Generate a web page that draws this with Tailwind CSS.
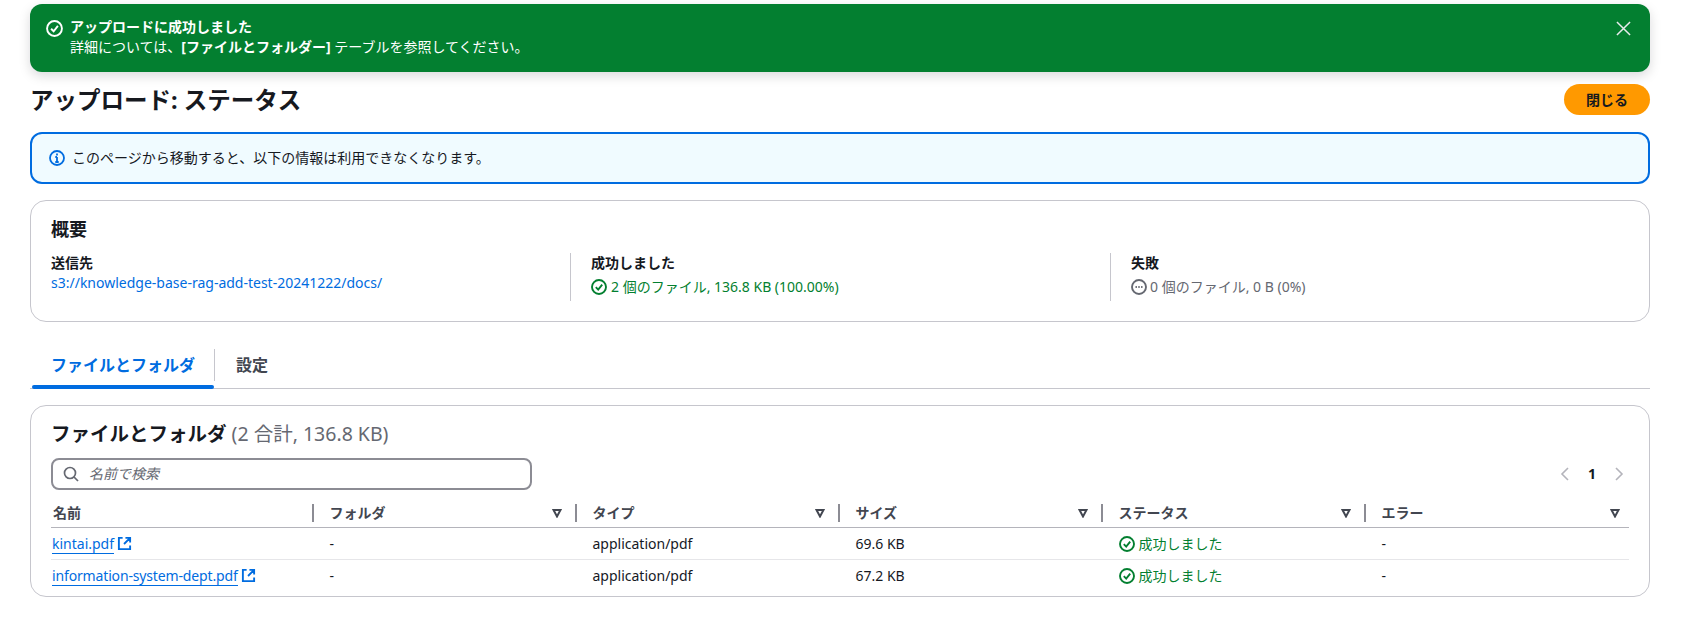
<!DOCTYPE html>
<html lang="ja">
<head>
<meta charset="utf-8">
<script src="https://cdn.jsdelivr.net/npm/@tailwindcss/browser@4"></script>
</head>
<body class="bg-white overflow-hidden">
<div class="w-[1689px] h-[630px] pl-[30px] pr-[39px] pt-[4px] flex flex-col text-[14px] leading-[20px] text-[#16191f] font-['Noto_Sans','Noto_Sans_CJK_JP',sans-serif]">

  <div class="h-[68px] shrink-0 rounded-[12px] bg-[#037f30] text-white flex justify-between pl-[16px] pr-[19px] pt-[13px] shadow-[0_4px_12px_rgba(0,7,22,0.15)]">
    <div class="flex gap-[7px]">
      <svg class="w-[17px] h-[17px] mt-[3px]" viewBox="0 0 16 16" fill="none" stroke="currentColor" stroke-width="1.8"><circle cx="8" cy="8" r="7"/><path d="M4.8 8.2 7.2 10.6 11.2 5.6"/></svg>
      <div>
        <div class="font-bold">アップロードに成功しました</div>
        <div>詳細については、<span class="font-bold">[ファイルとフォルダー]</span> テーブルを参照してください。</div>
      </div>
    </div>
    <svg class="w-[15px] h-[15px] mt-[4px]" viewBox="0 0 16 16" fill="none" stroke="#e9ebed" stroke-width="1.6"><path d="M1 1 15 15M15 1 1 15"/></svg>
  </div>

  <div class="h-[31px] mt-[12px] shrink-0 flex justify-between items-center">
    <h1 class="text-[23.5px] leading-[31px] mt-[2px] font-bold text-[#16191f]">アップロード: ステータス</h1>
    <button class="w-[86px] h-[31px] rounded-full bg-[#ff9900] text-[#16191f] font-bold text-[14px]">閉じる</button>
  </div>

  <div class="h-[52px] mt-[17px] shrink-0 rounded-[12px] border-2 border-[#006ce0] bg-[#f0fbff] flex items-center gap-[7px] pl-[17px]">
    <svg class="w-[16px] h-[16px]" viewBox="0 0 16 16" fill="none" stroke="#006ce0" stroke-width="1.8"><circle cx="8" cy="8" r="7"/><path d="M8 7v5M6.3 12h3.4M6.3 7H8"/><path d="M8 3.6v1.8" stroke-width="1.8"/></svg>
    <span>このページから移動すると、以下の情報は利用できなくなります。</span>
  </div>

  <section class="h-[122px] mt-[16px] shrink-0 rounded-[16px] border border-[#c6c6cd] pl-[20px] pr-[20px] pt-[16px]">
    <h2 class="text-[18px] leading-[24px] font-bold">概要</h2>
    <div class="grid grid-cols-[519px_540px_1fr] mt-[12px]">
      <div class="h-[48px]">
        <div class="font-bold">送信先</div>
        <a class="text-[#006ce0]">s3://knowledge-base-rag-add-test-20241222/docs/</a>
      </div>
      <div class="h-[48px] border-l border-[#c6c6cd] pl-[20px]">
        <div class="font-bold">成功しました</div>
        <div class="flex items-center gap-[4px] text-[#037f30] mt-[4px]">
          <svg class="w-[16px] h-[16px]" viewBox="0 0 16 16" fill="none" stroke="currentColor" stroke-width="1.9"><circle cx="8" cy="8" r="7"/><path d="M4.8 8.2 7.2 10.6 11.2 5.6"/></svg>
          <span>2 個のファイル, 136.8 KB (100.00%)</span>
        </div>
      </div>
      <div class="h-[48px] border-l border-[#c6c6cd] pl-[20px]">
        <div class="font-bold">失敗</div>
        <div class="flex items-center gap-[3px] text-[#656871] mt-[4px]">
          <svg class="w-[16px] h-[16px]" viewBox="0 0 16 16" fill="none" stroke="currentColor" stroke-width="1.9"><circle cx="8" cy="8" r="7"/><path d="M4.5 8h1.4M7.3 8h1.4M10.1 8h1.4" stroke-width="1.8"/></svg>
          <span>0 個のファイル, 0 B (0%)</span>
        </div>
      </div>
    </div>
  </section>

  <div class="h-[41px] mt-[26px] shrink-0 flex border-b border-[#c6c6cd] relative">
    <div class="w-[182px] ml-[2px] relative flex items-center pl-[19px] pb-[7px] text-[16px] font-bold text-[#006ce0]">
      ファイルとフォルダ
      <div class="absolute left-0 right-0 bottom-[-1px] h-[4px] rounded-full bg-[#006ce0]"></div>
    </div>
    <div class="w-px h-[32px] mt-[1px] bg-[#c6c6cd]"></div>
    <div class="flex items-center pl-[21px] pb-[7px] text-[16px] font-bold text-[#424650]">設定</div>
  </div>

  <section class="h-[192px] mt-[16px] shrink-0 rounded-[16px] border border-[#c6c6cd] pl-[20px] pr-[20px] pt-[16px]">
    <h2 class="text-[19.5px] leading-[24px] font-bold">ファイルとフォルダ <span class="font-normal text-[#656871]">(2 合計, 136.8 KB)</span></h2>
    <div class="flex justify-between items-center mt-[12px]">
      <div class="w-[481px] h-[32px] rounded-[8px] border-2 border-[#8c8c94] flex items-center gap-[10px] pl-[10px]">
        <svg class="w-[16px] h-[16px]" viewBox="0 0 16 16" fill="none" stroke="#656871" stroke-width="1.7"><circle cx="7" cy="7" r="5.5"/><path d="M11 11 15 15"/></svg>
        <span class="italic text-[#656871]">名前で検索</span>
      </div>
      <div class="flex items-center gap-[17px] pr-[4px]">
        <svg class="w-[12px] h-[16px]" viewBox="0 0 12 16" fill="none" stroke="#b4b4bb" stroke-width="1.6"><path d="M9 2 3 8l6 6"/></svg>
        <span class="font-bold">1</span>
        <svg class="w-[12px] h-[16px]" viewBox="0 0 12 16" fill="none" stroke="#b4b4bb" stroke-width="1.6"><path d="M3 2l6 6-6 6"/></svg>
      </div>
    </div>
    <div class="mt-[6px]">
      <div class="grid grid-cols-[262.5px_263px_263px_263px_263px_1fr] h-[32px] pt-[2px] border-b border-[#b4b4bb] text-[#424650] font-bold items-center">
        <div class="flex justify-between items-center pl-[2px] h-[18px]"><span>名前</span><i class="w-[2px] h-[18px] bg-[#8c8c94]"></i></div>
        <div class="flex justify-between items-center pl-[16px] h-[18px]"><span>フォルダ</span><span class="flex items-center gap-[13px]"><svg class="w-[10px] h-[10px]" viewBox="0 0 10 10" fill="none" stroke="#424650" stroke-width="2"><path d="M1.5 2h7L5 8.5z"/></svg><i class="w-[2px] h-[18px] bg-[#8c8c94]"></i></span></div>
        <div class="flex justify-between items-center pl-[16px] h-[18px]"><span>タイプ</span><span class="flex items-center gap-[13px]"><svg class="w-[10px] h-[10px]" viewBox="0 0 10 10" fill="none" stroke="#424650" stroke-width="2"><path d="M1.5 2h7L5 8.5z"/></svg><i class="w-[2px] h-[18px] bg-[#8c8c94]"></i></span></div>
        <div class="flex justify-between items-center pl-[16px] h-[18px]"><span>サイズ</span><span class="flex items-center gap-[13px]"><svg class="w-[10px] h-[10px]" viewBox="0 0 10 10" fill="none" stroke="#424650" stroke-width="2"><path d="M1.5 2h7L5 8.5z"/></svg><i class="w-[2px] h-[18px] bg-[#8c8c94]"></i></span></div>
        <div class="flex justify-between items-center pl-[16px] h-[18px]"><span>ステータス</span><span class="flex items-center gap-[13px]"><svg class="w-[10px] h-[10px]" viewBox="0 0 10 10" fill="none" stroke="#424650" stroke-width="2"><path d="M1.5 2h7L5 8.5z"/></svg><i class="w-[2px] h-[18px] bg-[#8c8c94]"></i></span></div>
        <div class="flex justify-between items-center pl-[16px] pr-[9px] h-[18px]"><span>エラー</span><svg class="w-[10px] h-[10px]" viewBox="0 0 10 10" fill="none" stroke="#424650" stroke-width="2"><path d="M1.5 2h7L5 8.5z"/></svg></div>
      </div>
      <div class="grid grid-cols-[262.5px_263px_263px_263px_263px_1fr] h-[32px] border-b border-[#e6e6e9] items-center">
        <div class="flex items-center gap-[3px] pl-[1px]"><a class="text-[#006ce0] border-b border-[#006ce0] leading-[19px]">kintai.pdf</a><svg class="w-[15px] h-[15px]" viewBox="0 0 16 16" fill="none" stroke="#006ce0" stroke-width="2"><path d="M6 2H2v12h12v-4M9 2h5v5M14 2 7.5 8.5"/></svg></div>
        <div class="pl-[16px]">-</div>
        <div class="pl-[16px]">application/pdf</div>
        <div class="pl-[16px]">69.6 KB</div>
        <div class="pl-[16px] flex items-center gap-[4px] text-[#037f30]"><svg class="w-[16px] h-[16px]" viewBox="0 0 16 16" fill="none" stroke="currentColor" stroke-width="1.9"><circle cx="8" cy="8" r="7"/><path d="M4.8 8.2 7.2 10.6 11.2 5.6"/></svg><span>成功しました</span></div>
        <div class="pl-[16px]">-</div>
      </div>
      <div class="grid grid-cols-[262.5px_263px_263px_263px_263px_1fr] h-[31px] items-center">
        <div class="flex items-center gap-[3px] pl-[1px]"><a class="text-[#006ce0] border-b border-[#006ce0] leading-[19px] tracking-[-0.15px]">information-system-dept.pdf</a><svg class="w-[15px] h-[15px]" viewBox="0 0 16 16" fill="none" stroke="#006ce0" stroke-width="2"><path d="M6 2H2v12h12v-4M9 2h5v5M14 2 7.5 8.5"/></svg></div>
        <div class="pl-[16px]">-</div>
        <div class="pl-[16px]">application/pdf</div>
        <div class="pl-[16px]">67.2 KB</div>
        <div class="pl-[16px] flex items-center gap-[4px] text-[#037f30]"><svg class="w-[16px] h-[16px]" viewBox="0 0 16 16" fill="none" stroke="currentColor" stroke-width="1.9"><circle cx="8" cy="8" r="7"/><path d="M4.8 8.2 7.2 10.6 11.2 5.6"/></svg><span>成功しました</span></div>
        <div class="pl-[16px]">-</div>
      </div>
    </div>
  </section>
</div>
</body>
</html>
